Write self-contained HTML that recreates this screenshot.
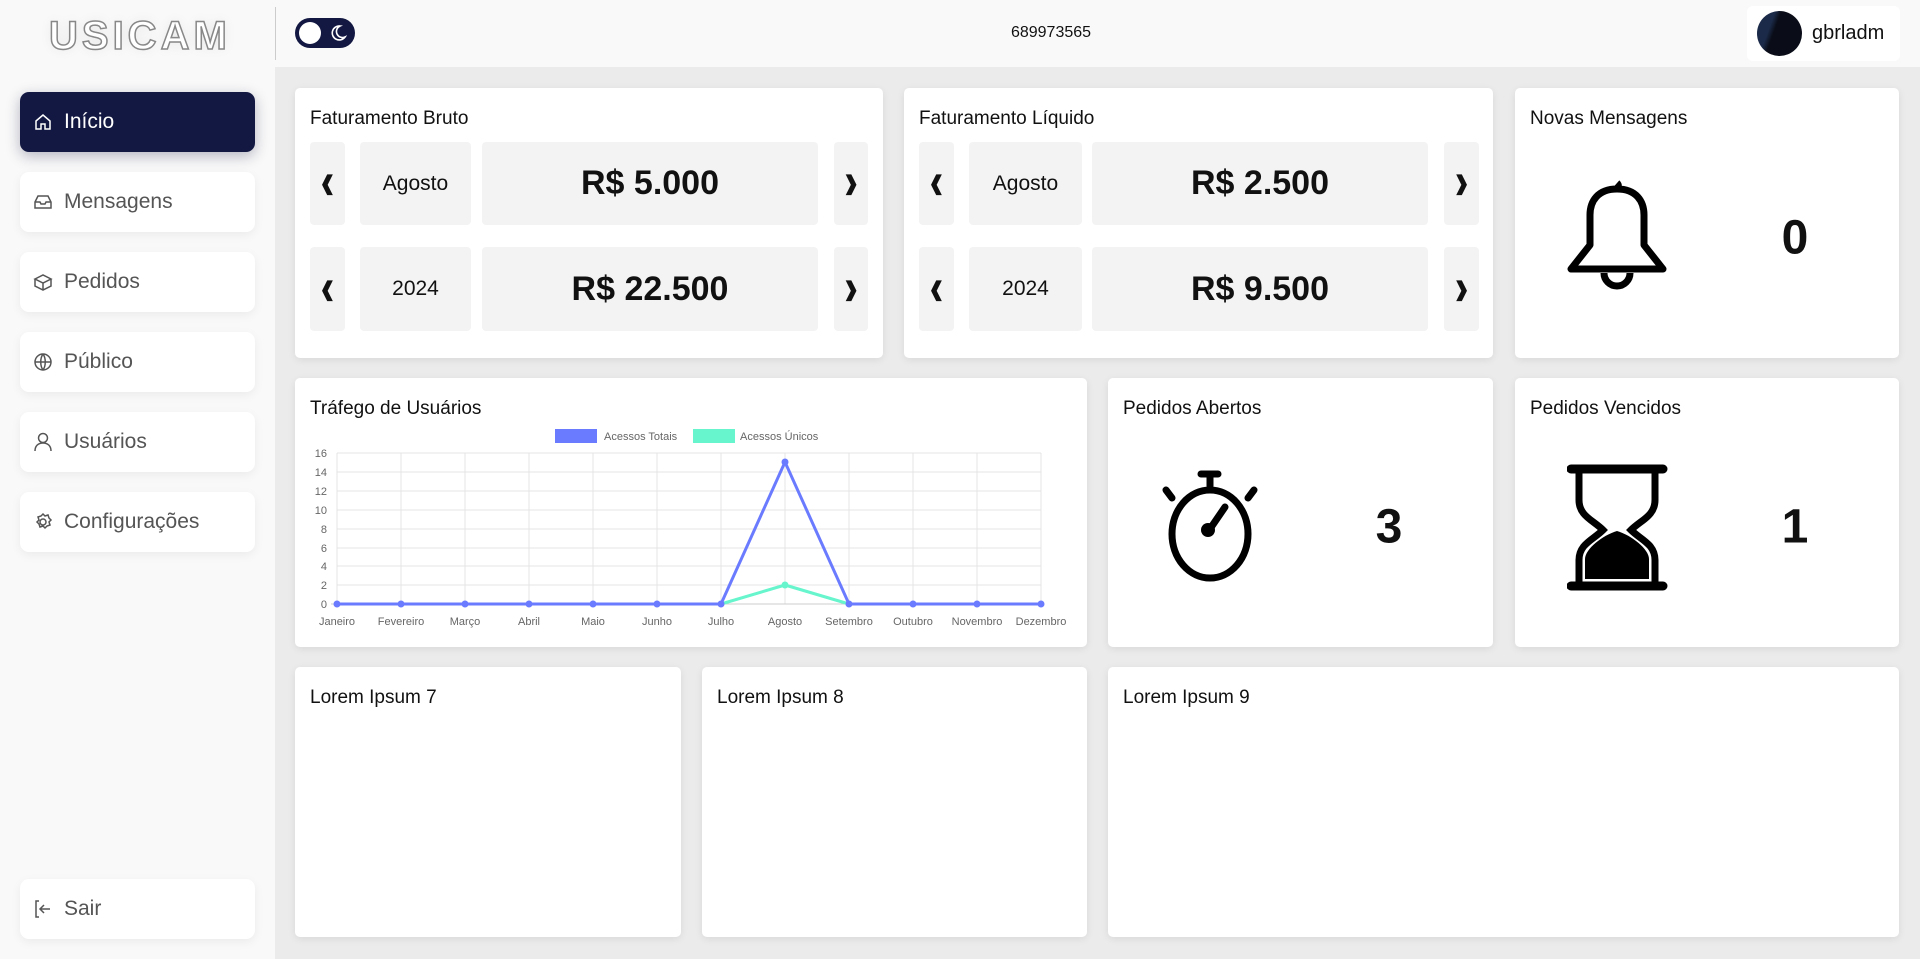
<!DOCTYPE html>
<html><head><meta charset="utf-8"><style>
*{box-sizing:border-box;margin:0;padding:0}
body{width:1920px;height:959px;overflow:hidden;background:#ebebeb;font-family:"Liberation Sans",sans-serif;position:relative;color:#111}
.abs{position:absolute}
#side{left:0;top:0;width:275px;height:959px;background:#f9f9f9}
#head{left:275px;top:0;width:1645px;height:67px;background:#f9f9f9}
.nav{position:absolute;left:20px;width:235px;height:60px;background:#fff;border-radius:9px;box-shadow:0 3px 10px rgba(0,0,0,.06);display:flex;align-items:center;padding-left:13px;font-size:21px;color:#555}
.nav svg{width:20px;height:20px;margin-right:11px;fill:none;stroke:#555;stroke-width:1.5}
.nav.act{background:#131842;color:#fff;box-shadow:0 4px 14px rgba(19,24,66,.3)}
.nav.act svg{stroke:#fff}
.card{position:absolute;background:#fff;border-radius:5px;box-shadow:0 2px 8px rgba(0,0,0,.08)}
.ttl{position:absolute;left:15px;top:20px;font-size:19px;color:#111}
.box{position:absolute;background:#f3f3f3;border-radius:4px;display:flex;align-items:center;justify-content:center}
.arr{font-size:20px;font-weight:bold}
.mo{font-size:21px}
.val{font-size:34px;font-weight:bold}
.big{position:absolute;font-size:48px;font-weight:bold;transform:translate(-50%,-50%)}
</style></head><body>
<div id="side" class="abs"></div>
<div id="head" class="abs"></div>
<div class="abs" style="left:49px;top:14px;font-size:40px;font-weight:bold;color:#fff;-webkit-text-stroke:1.5px #888;letter-spacing:4px;text-shadow:0 0 12px rgba(0,0,0,.08)">USICAM</div>
<div class="abs" style="left:275px;top:7px;width:1px;height:53px;background:#ccc"></div>
<div class="abs" style="left:295px;top:18px;width:60px;height:30px;border-radius:15px;background:#131842"><div class="abs" style="left:4px;top:4px;width:22px;height:22px;border-radius:50%;background:#fff"></div>
<svg class="abs" style="left:34px;top:6px" width="18" height="18" viewBox="0 0 18 18"><path d="M11 2a7 7 0 1 0 5 11A6 6 0 0 1 11 2z" fill="none" stroke="#fff" stroke-width="1.6"/></svg></div>
<div class="abs" style="left:1000px;top:24px;width:102px;text-align:center;font-size:16px">689973565</div>
<div class="abs" style="left:1747px;top:6px;width:153px;height:55px;background:#fff;border-radius:6px"><div class="abs" style="left:10px;top:5px;width:45px;height:45px;border-radius:50%;background:linear-gradient(110deg,#1b2a48 30%,#0a0d18 40%)"></div><div class="abs" style="left:65px;top:16px;font-size:20px">gbrladm</div></div>

<div class="nav act" style="top:92px"><svg viewBox="0 0 20 20"><path d="M3 9l7-6 7 6v8h-5v-5h-4v5H3z"/></svg>Início</div>
<div class="nav" style="top:172px"><svg viewBox="0 0 20 20"><path d="M2 10l3-6h10l3 6v6H2zM2 10h5l1 2h4l1-2h5"/></svg>Mensagens</div>
<div class="nav" style="top:252px"><svg viewBox="0 0 20 20"><path d="M2 7l8-4 8 4-8 4zM2 7v7l8 4 8-4V7M10 11v7"/></svg>Pedidos</div>
<div class="nav" style="top:332px"><svg viewBox="0 0 20 20"><circle cx="10" cy="10" r="8"/><path d="M2 10h16M10 2c-3 4-3 12 0 16M10 2c3 4 3 12 0 16"/></svg>Público</div>
<div class="nav" style="top:412px"><svg viewBox="0 0 20 20"><circle cx="10" cy="6" r="4.5"/><path d="M2 19c0-5 3-8 8-8s8 3 8 8"/></svg>Usuários</div>
<div class="nav" style="top:492px"><svg viewBox="0 0 20 20"><circle cx="10" cy="10" r="3"/><path d="M10 2l2 2 3-1 1 3 2 2-2 2 1 3-3 1-2 2-2-2-3 1-1-3-2-2 2-2-1-3 3-1z"/></svg>Configurações</div>
<div class="nav" style="top:879px"><svg viewBox="0 0 20 20"><path d="M6 2H3v16h3M17 10H8M11 6l-4 4 4 4"/></svg>Sair</div>

<div class="card" style="left:295px;top:88px;width:588px;height:270px"><div class="ttl">Faturamento Bruto</div>
<div class="box arr" style="left:15px;top:54px;width:35px;height:83px">❰</div><div class="box mo" style="left:65px;top:54px;width:111px;height:83px">Agosto</div><div class="box val" style="left:187px;top:54px;width:336px;height:83px">R$ 5.000</div><div class="box arr" style="left:539px;top:54px;width:34px;height:83px">❱</div>
<div class="box arr" style="left:15px;top:159px;width:35px;height:84px">❰</div><div class="box mo" style="left:65px;top:159px;width:111px;height:84px">2024</div><div class="box val" style="left:187px;top:159px;width:336px;height:84px">R$ 22.500</div><div class="box arr" style="left:539px;top:159px;width:34px;height:84px">❱</div></div>

<div class="card" style="left:904px;top:88px;width:589px;height:270px"><div class="ttl">Faturamento Líquido</div>
<div class="box arr" style="left:15px;top:54px;width:35px;height:83px">❰</div><div class="box mo" style="left:65px;top:54px;width:113px;height:83px">Agosto</div><div class="box val" style="left:188px;top:54px;width:336px;height:83px">R$ 2.500</div><div class="box arr" style="left:540px;top:54px;width:35px;height:83px">❱</div>
<div class="box arr" style="left:15px;top:159px;width:35px;height:84px">❰</div><div class="box mo" style="left:65px;top:159px;width:113px;height:84px">2024</div><div class="box val" style="left:188px;top:159px;width:336px;height:84px">R$ 9.500</div><div class="box arr" style="left:540px;top:159px;width:35px;height:84px">❱</div></div>

<div class="card" style="left:1515px;top:88px;width:384px;height:270px"><div class="ttl">Novas Mensagens</div>
<svg class="abs" style="left:50px;top:91px" width="104" height="115" viewBox="0 0 104 115"><path d="M52 4a4 4 0 0 1 0 6M52 10c-19 0-27 12-27 26v30L6 90h92L79 66V36c0-14-8-26-27-26zM39 94a13 13 0 0 0 26 0" fill="none" stroke="#000" stroke-width="7" stroke-linejoin="round"/></svg>
<div class="big" style="left:280px;top:150px">0</div></div>

<div class="card" style="left:295px;top:378px;width:792px;height:269px"><div class="ttl">Tráfego de Usuários</div>
<svg class="abs" style="left:0;top:0" width="792" height="269" viewBox="0 0 792 269" font-family="Liberation Sans,sans-serif" font-size="11" fill="#666">
<rect x="260" y="51" width="42" height="14" fill="#6b7bff"/><text x="309" y="62">Acessos Totais</text>
<rect x="398" y="51" width="42" height="14" fill="#66f5cc"/><text x="445" y="62">Acessos Únicos</text>
<g stroke="#e4e4e4" stroke-width="1">
<path d="M42 75H746M42 94H746M42 113H746M42 132H746M42 151H746M42 170H746M42 188H746M42 207H746"/>
<path d="M42 75V226M106 75V226M170 75V226M234 75V226M298 75V226M362 75V226M426 75V226M490 75V226M554 75V226M618 75V226M682 75V226M746 75V226"/>
</g>
<path d="M36 226H746" stroke="#ccc"/>
<g text-anchor="end"><text x="32" y="79">16</text><text x="32" y="98">14</text><text x="32" y="117">12</text><text x="32" y="136">10</text><text x="32" y="155">8</text><text x="32" y="174">6</text><text x="32" y="192">4</text><text x="32" y="211">2</text><text x="32" y="230">0</text></g>
<g text-anchor="middle"><text x="42" y="247">Janeiro</text><text x="106" y="247">Fevereiro</text><text x="170" y="247">Março</text><text x="234" y="247">Abril</text><text x="298" y="247">Maio</text><text x="362" y="247">Junho</text><text x="426" y="247">Julho</text><text x="490" y="247">Agosto</text><text x="554" y="247">Setembro</text><text x="618" y="247">Outubro</text><text x="682" y="247">Novembro</text><text x="746" y="247">Dezembro</text></g>
<polyline points="426,226 490,207 554,226" fill="none" stroke="#66f5cc" stroke-width="3"/>
<polyline points="42,226 106,226 170,226 234,226 298,226 362,226 426,226 490,84 554,226 618,226 682,226 746,226" fill="none" stroke="#6b7bff" stroke-width="3"/>
<g fill="#6b7bff"><circle cx="42" cy="226" r="3.5"/><circle cx="106" cy="226" r="3.5"/><circle cx="170" cy="226" r="3.5"/><circle cx="234" cy="226" r="3.5"/><circle cx="298" cy="226" r="3.5"/><circle cx="362" cy="226" r="3.5"/><circle cx="426" cy="226" r="3.5"/><circle cx="490" cy="84" r="3.5"/><circle cx="554" cy="226" r="3.5"/><circle cx="618" cy="226" r="3.5"/><circle cx="682" cy="226" r="3.5"/><circle cx="746" cy="226" r="3.5"/></g>
<circle cx="490" cy="207" r="3.5" fill="#66f5cc"/>
</svg></div>

<div class="card" style="left:1108px;top:378px;width:385px;height:269px"><div class="ttl">Pedidos Abertos</div>
<svg class="abs" style="left:50px;top:92px" width="104" height="114" viewBox="0 0 104 114"><g fill="none" stroke="#000" stroke-width="7" stroke-linecap="round"><path d="M43 4h17M52 4v12"/><ellipse cx="52" cy="64" rx="38" ry="44"/><path d="M14 28l-6-8M90 28l6-8M54 56l13-19"/></g><circle cx="50" cy="60" r="7"/></svg>
<div class="big" style="left:281px;top:149px">3</div></div>

<div class="card" style="left:1515px;top:378px;width:384px;height:269px"><div class="ttl">Pedidos Vencidos</div>
<svg class="abs" style="left:52px;top:86px" width="102" height="128" viewBox="0 0 102 128"><g fill="none" stroke="#000" stroke-linecap="round"><path d="M4 5h92M4 122h92" stroke-width="9"/><path d="M12 6v30c0 16 14 20 24 30c-10 10-24 14-24 30v25M88 6v30c0 16-14 20-24 30c10 10 24 14 24 30v25" stroke-width="7"/></g><path d="M18 115v-20c0-10 18-24 32-28c14 4 32 18 32 28v20z"/></svg>
<div class="big" style="left:280px;top:149px">1</div></div>

<div class="card" style="left:295px;top:667px;width:386px;height:270px"><div class="ttl">Lorem Ipsum 7</div></div>
<div class="card" style="left:702px;top:667px;width:385px;height:270px"><div class="ttl">Lorem Ipsum 8</div></div>
<div class="card" style="left:1108px;top:667px;width:791px;height:270px"><div class="ttl">Lorem Ipsum 9</div></div>
</body></html>
